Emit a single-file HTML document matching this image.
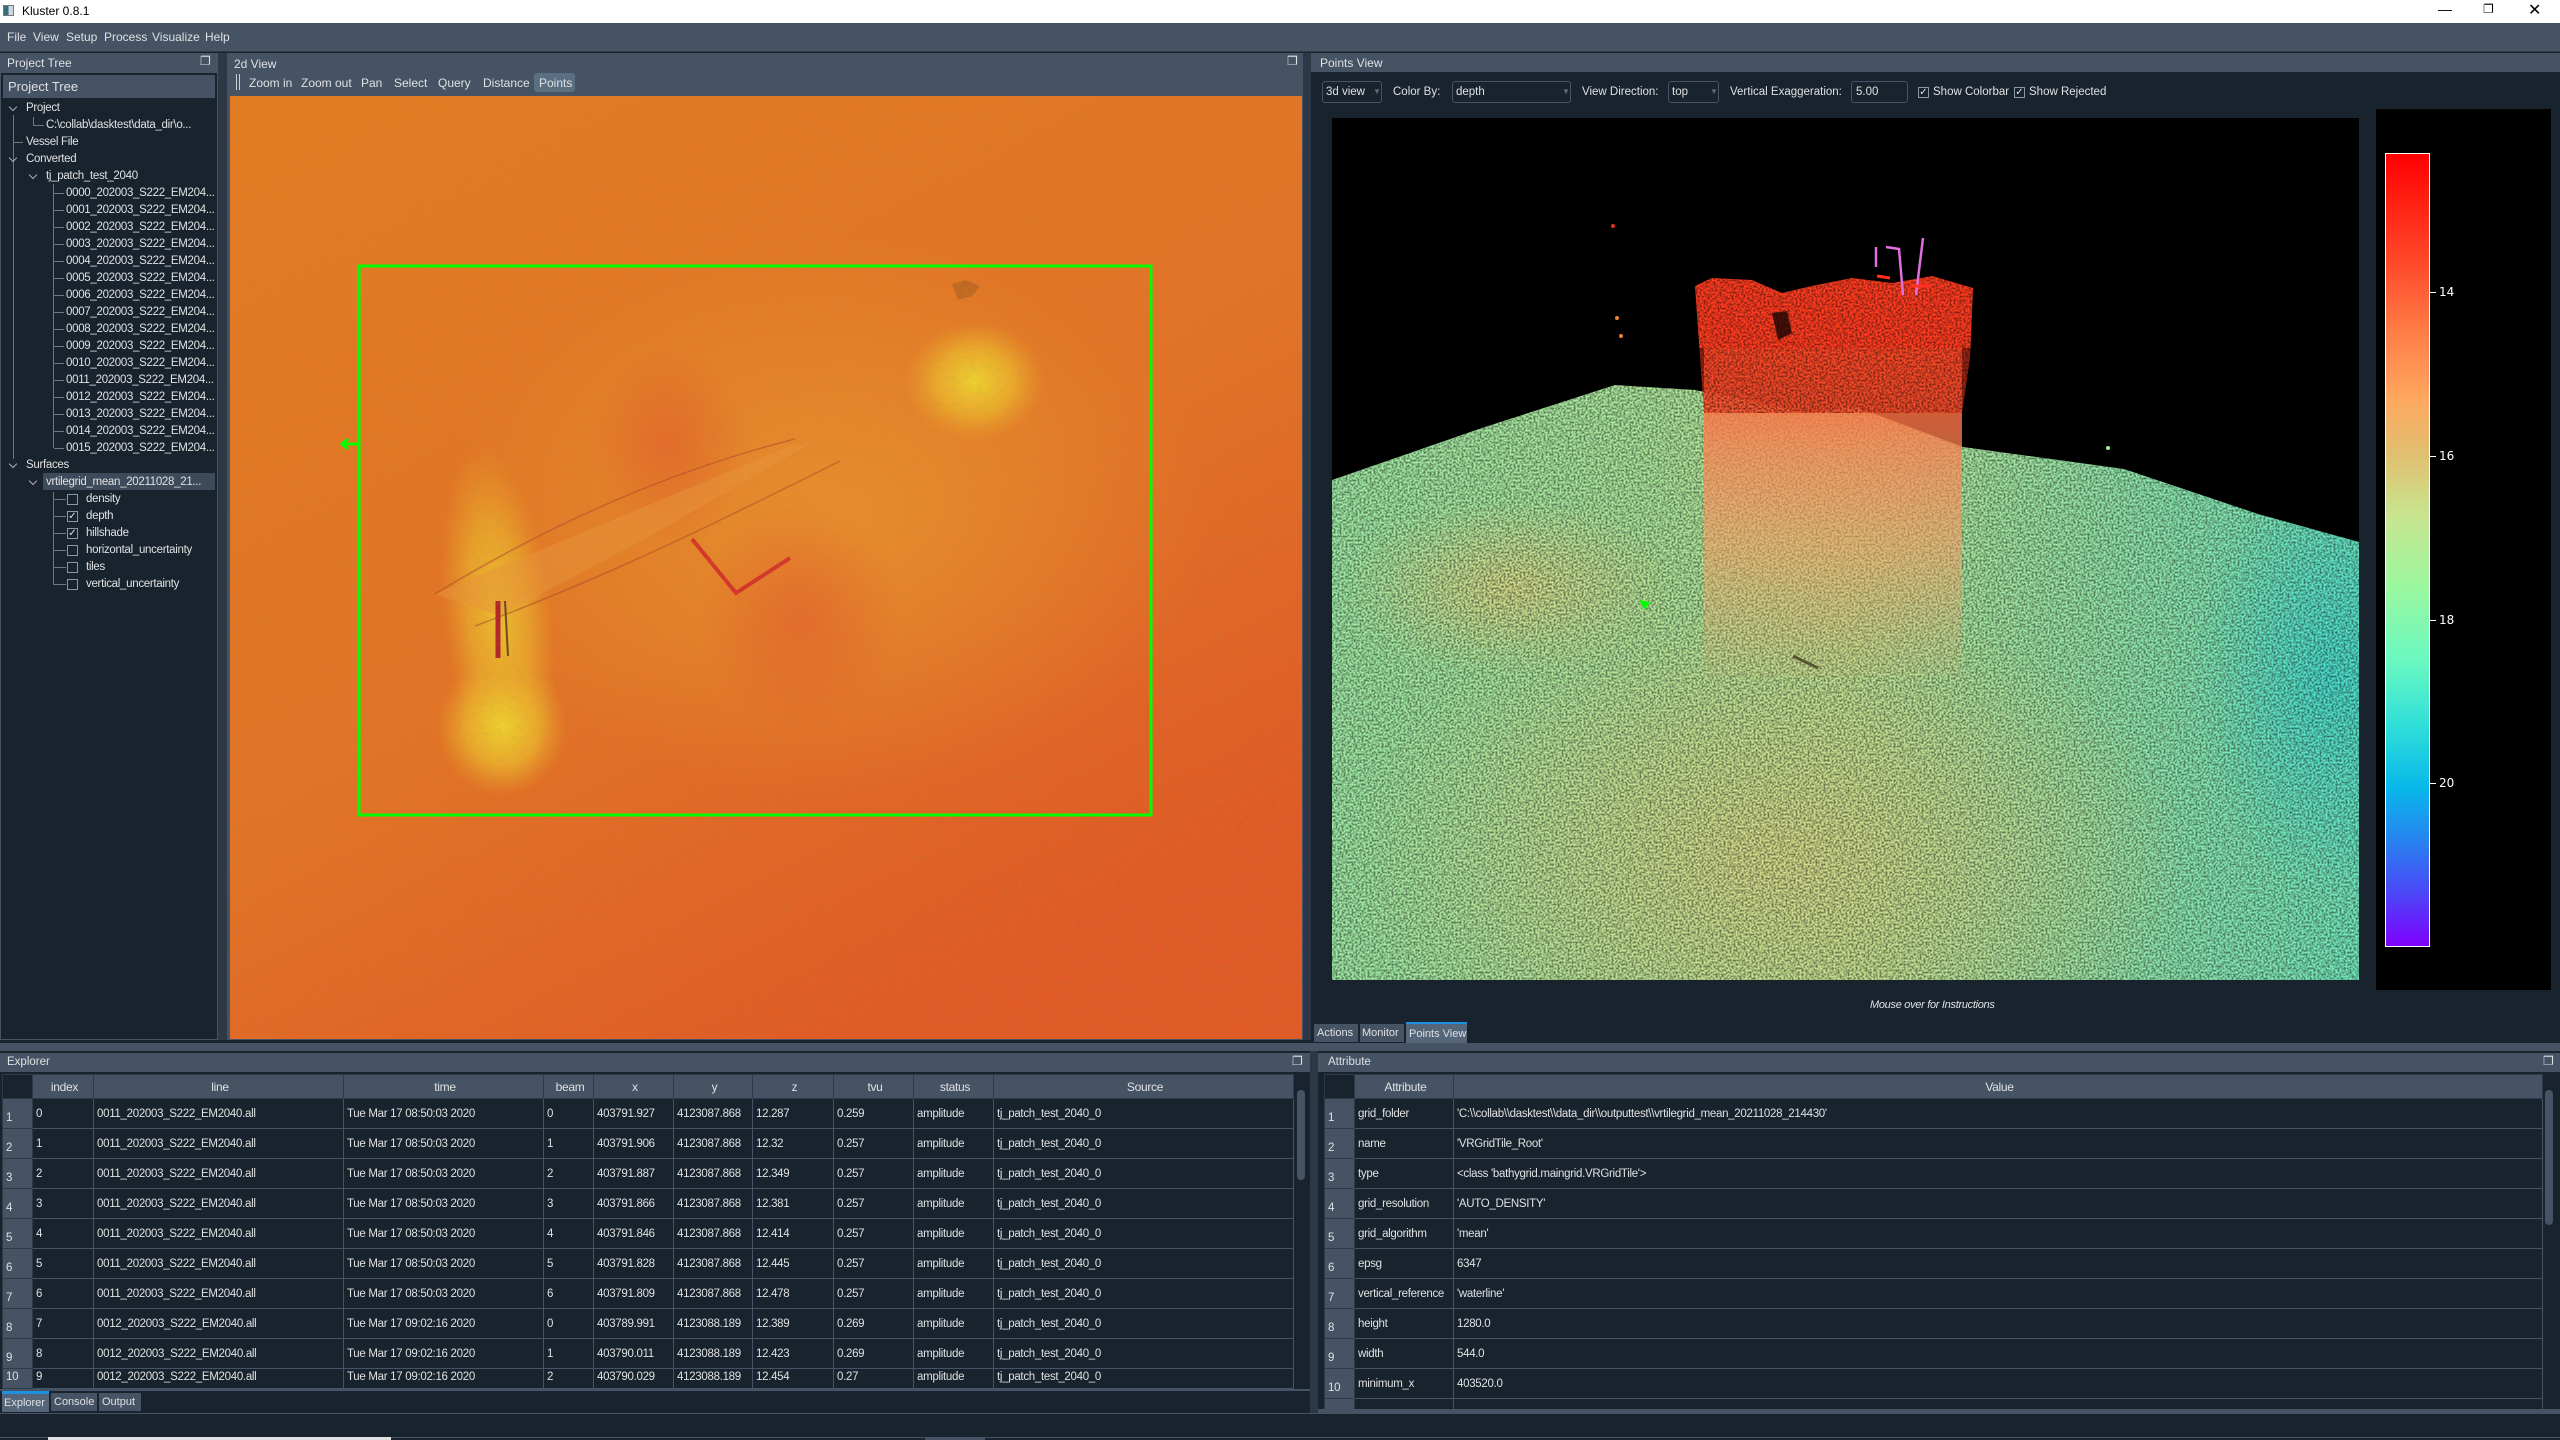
<!DOCTYPE html>
<html><head><meta charset="utf-8">
<style>
*{margin:0;padding:0;box-sizing:border-box}
body{width:2560px;height:1440px;background:#19232D;position:relative;overflow:hidden;font-family:"Liberation Sans",sans-serif;color:#DFE1E2;font-size:12px}
.a{position:absolute;white-space:nowrap}
.t{position:absolute;white-space:nowrap;line-height:17px;font-size:11.5px;letter-spacing:-0.3px}
.cb{position:absolute;width:11px;height:11px;border:1px solid #8a96a4;background:#19232D;font-size:10px;line-height:9px;text-align:center;color:#DFE1E2}
.ch{position:absolute;width:6px;height:6px;border-right:1px solid #aab;border-bottom:1px solid #aab;transform:rotate(45deg)}
table{border-collapse:collapse;position:absolute;table-layout:fixed}
td,th{border:1px solid #455364;height:30px;font-weight:normal;font-size:11.5px;text-align:left;padding-left:3px;overflow:hidden;white-space:nowrap;letter-spacing:-0.3px}
th{background:#455364;height:24px;text-align:center;border-color:#2d3a48;font-size:12px}
td.v{background:#455364;border-color:#2d3a48;padding-left:3px;padding-top:8px}
</style></head><body>
<div class="a" style="left:0;top:0;width:2560px;height:23px;background:#fff;color:#000"></div>
<div class="a" style="left:3px;top:5px;width:11px;height:11px;background:linear-gradient(90deg,#3a6d7a 50%,#cfd8dc 50%);border:1px solid #777"></div>
<div class="a" style="left:22px;top:4px;color:#000;font-size:12px">Kluster 0.8.1</div>
<div class="a" style="left:2438px;top:1px;color:#000;font-size:14px">—</div>
<div class="a" style="left:2483px;top:2px;color:#000;font-size:12px">❐</div>
<div class="a" style="left:2528px;top:0px;color:#000;font-size:16px">✕</div>
<div class="a" style="left:0;top:23px;width:2560px;height:29px;background:#455364;border-bottom:1px solid #2d3a48"></div>
<div class="a" style="left:7px;top:30px">File</div>
<div class="a" style="left:33px;top:30px">View</div>
<div class="a" style="left:66px;top:30px">Setup</div>
<div class="a" style="left:104px;top:30px">Process</div>
<div class="a" style="left:152px;top:30px">Visualize</div>
<div class="a" style="left:205px;top:30px">Help</div>

<div class="a" style="left:0;top:53px;width:218px;height:987px;background:#19232D;border:1px solid #455364"></div>
<div class="a" style="left:0;top:53px;width:218px;height:20px;background:#455364"></div>
<div class="a" style="left:7px;top:56px">Project Tree</div>
<div class="a" style="left:200px;top:54px;font-size:12px">❐</div>
<div class="a" style="left:3px;top:75px;width:212px;height:23px;background:#455364"></div>
<div class="a" style="left:8px;top:79px;font-size:13px">Project Tree</div>
<div class="a" style="left:218px;top:53px;width:9px;height:987px;background:#2d3846"></div>
<div class="a" style="left:13px;top:115px;width:1px;height:344px;background:#6b7886"></div>
<div class="a" style="left:33px;top:117px;width:1px;height:9px;background:#6b7886"></div>
<div class="a" style="left:33px;top:125px;width:10px;height:1px;background:#6b7886"></div>
<div class="a" style="left:13px;top:142px;width:10px;height:1px;background:#6b7886"></div>
<div class="a" style="left:53px;top:184px;width:1px;height:264px;background:#6b7886"></div>
<div class="a" style="left:53px;top:492px;width:1px;height:93px;background:#6b7886"></div>
<div class="a" style="left:43px;top:473px;width:172px;height:17px;background:#3d4a5a"></div>
<div id="tree"></div>

<div class="a" style="left:227px;top:53px;width:1076px;height:43px;background:#455364"></div>
<div class="a" style="left:234px;top:57px">2d View</div>
<div class="a" style="left:1287px;top:54px">❐</div>
<div class="a" style="left:236px;top:74px;width:1px;height:16px;background:#ccc"></div>
<div class="a" style="left:239px;top:74px;width:1px;height:16px;background:#ccc"></div>
<div class="a" style="left:534px;top:73px;width:41px;height:19px;background:#5b6f83;border-radius:3px"></div>
<div class="a" style="left:249px;top:76px">Zoom in</div>
<div class="a" style="left:301px;top:76px">Zoom out</div>
<div class="a" style="left:361px;top:76px">Pan</div>
<div class="a" style="left:394px;top:76px">Select</div>
<div class="a" style="left:438px;top:76px">Query</div>
<div class="a" style="left:483px;top:76px">Distance</div>
<div class="a" style="left:539px;top:76px">Points</div>
<div class="a" style="left:227px;top:96px;width:1076px;height:944px;background:#455364"></div>
<svg class="a" style="left:230px;top:96px" width="1072" height="943" viewBox="0 0 1072 943">
<defs>
<linearGradient id="mb" x1="0" y1="0" x2="0.6" y2="1"><stop offset="0" stop-color="#e27c22"/><stop offset="0.6" stop-color="#e17326"/><stop offset="1" stop-color="#df5a26"/></linearGradient>
<radialGradient id="y1"><stop offset="0" stop-color="#ecd030"/><stop offset="0.55" stop-color="#eab02c" stop-opacity="0.85"/><stop offset="1" stop-color="#e8a02a" stop-opacity="0"/></radialGradient>
<radialGradient id="r1"><stop offset="0" stop-color="#e0502a" stop-opacity="0.45"/><stop offset="1" stop-color="#e0502a" stop-opacity="0"/></radialGradient>
<radialGradient id="o1"><stop offset="0" stop-color="#e99a30" stop-opacity="0.7"/><stop offset="1" stop-color="#e99a30" stop-opacity="0"/></radialGradient>
<filter id="nz" x="0" y="0" width="100%" height="100%"><feTurbulence type="fractalNoise" baseFrequency="0.15 0.3" numOctaves="2" seed="3"/><feColorMatrix values="0 0 0 0 0.45  0 0 0 0 0.25  0 0 0 0 0.1  0 0 0 1.5 -0.7"/></filter>
</defs>
<rect width="1072" height="943" fill="url(#mb)"/>
<ellipse cx="600" cy="420" rx="380" ry="280" fill="url(#o1)"/>
<ellipse cx="440" cy="350" rx="80" ry="100" fill="url(#r1)"/>
<ellipse cx="570" cy="520" rx="100" ry="120" fill="url(#r1)"/>
<ellipse cx="745" cy="285" rx="70" ry="60" fill="url(#y1)"/>
<ellipse cx="268" cy="520" rx="55" ry="170" fill="url(#y1)" transform="rotate(-6 268 520)" opacity="0.8"/>
<ellipse cx="272" cy="630" rx="65" ry="70" fill="url(#y1)"/>
<path d="M205 498 L560 350 L585 345 L420 440 L270 520 Z" fill="#e8943a" opacity="0.5"/>
<path d="M205 498 C300 440 420 380 565 343 M245 530 C380 480 500 420 610 365" stroke="#b0502a" stroke-width="1.5" fill="none" opacity="0.6"/>
<path d="M462 443 L506 497 L560 462" stroke="#d02a2a" stroke-width="4" fill="none" opacity="0.85"/>
<path d="M268 505 L268 562" stroke="#b02828" stroke-width="5"/>
<path d="M275 505 L278 560" stroke="#6d4a20" stroke-width="2"/>
<path d="M722 188 L736 184 L750 190 L742 200 L728 204 Z" fill="#a05a20" opacity="0.5"/>
<rect width="1072" height="943" filter="url(#nz)" opacity="0.25"/>
<rect x="129" y="170" width="792" height="549" fill="none" stroke="#00ff00" stroke-width="3"/>
<path d="M112 348 L128 348 M118 343 L112 348 L118 353" stroke="#00ff00" stroke-width="3" fill="none"/>
</svg>
<div class="a" style="left:1303px;top:53px;width:8px;height:987px;background:#2d3846"></div>

<div class="a" style="left:1311px;top:53px;width:1249px;height:19px;background:#455364"></div>
<div class="a" style="left:1320px;top:56px">Points View</div>
<div class="a" style="left:1322px;top:81px;width:60px;height:22px;border:1px solid #455364;border-radius:3px"></div>
<div class="a" style="left:1326px;top:86px;font-size:11.5px">3d view</div><div class="a" style="left:1373px;top:87px;font-size:8px;color:#667">▼</div>
<div class="a" style="left:1393px;top:86px;font-size:11.5px">Color By:</div>
<div class="a" style="left:1452px;top:81px;width:119px;height:22px;border:1px solid #455364;border-radius:3px"></div>
<div class="a" style="left:1456px;top:86px;font-size:11.5px">depth</div><div class="a" style="left:1562px;top:87px;font-size:8px;color:#667">▼</div>
<div class="a" style="left:1582px;top:86px;font-size:11.5px">View Direction:</div>
<div class="a" style="left:1668px;top:81px;width:51px;height:22px;border:1px solid #455364;border-radius:3px"></div>
<div class="a" style="left:1672px;top:86px;font-size:11.5px">top</div><div class="a" style="left:1710px;top:87px;font-size:8px;color:#667">▼</div>
<div class="a" style="left:1730px;top:86px;font-size:11.5px">Vertical Exaggeration:</div>
<div class="a" style="left:1851px;top:81px;width:57px;height:22px;border:1px solid #455364;border-radius:3px"></div>
<div class="a" style="left:1856px;top:86px;font-size:11.5px">5.00</div>
<div class="cb" style="left:1918px;top:87px">✓</div><div class="a" style="left:1933px;top:86px;font-size:11.5px">Show Colorbar</div>
<div class="cb" style="left:2014px;top:87px">✓</div><div class="a" style="left:2029px;top:86px;font-size:11.5px">Show Rejected</div>
<svg class="a" style="left:1332px;top:118px" width="1027" height="862" viewBox="0 0 1027 862">
<defs>
<linearGradient id="tg" x1="0" y1="0" x2="1" y2="0"><stop offset="0" stop-color="#9ee8a4"/><stop offset="0.5" stop-color="#b6e496"/><stop offset="1" stop-color="#74e6bc"/></linearGradient>
<radialGradient id="ty" cx="0.5" cy="0.5" r="0.5"><stop offset="0" stop-color="#d8d888" stop-opacity="0.9"/><stop offset="1" stop-color="#d8d888" stop-opacity="0"/></radialGradient>
<radialGradient id="tc"><stop offset="0" stop-color="#40d8d0" stop-opacity="0.8"/><stop offset="1" stop-color="#40d8d0" stop-opacity="0"/></radialGradient>
<linearGradient id="st" x1="0" y1="0" x2="0" y2="1"><stop offset="0" stop-color="#ff5a30" stop-opacity="0.95"/><stop offset="0.3" stop-color="#ff8050" stop-opacity="0.75"/><stop offset="0.6" stop-color="#ff9a60" stop-opacity="0.55"/><stop offset="1" stop-color="#ffa060" stop-opacity="0.05"/></linearGradient>
<filter id="sp" x="0" y="0" width="100%" height="100%"><feTurbulence type="fractalNoise" baseFrequency="0.5" numOctaves="1" seed="7"/><feColorMatrix values="0 0 0 0 0  0 0 0 0 0  0 0 0 0 0  0 0 0 -3 1.9"/></filter>
<clipPath id="cl"><path d="M0 362 L150 310 L283 267 L363 272 L477 295 L524 289 L631 329 L792 351 L926 396 L1027 424 L1027 862 L0 862 Z"/></clipPath>
<clipPath id="tw"><path d="M363 168 L380 160 L420 162 L450 175 L480 168 L520 160 L560 165 L600 158 L641 170 L638 240 L630 295 L372 295 Z"/></clipPath>
</defs>
<rect width="1027" height="862" fill="#000"/>
<path d="M0 362 L150 310 L283 267 L363 272 L477 295 L524 289 L631 329 L792 351 L926 396 L1027 424 L1027 862 L0 862 Z" fill="url(#tg)"/>
<g clip-path="url(#cl)">
<ellipse cx="440" cy="740" rx="420" ry="260" fill="url(#ty)"/>
<ellipse cx="180" cy="470" rx="170" ry="90" fill="url(#ty)"/>
<ellipse cx="1000" cy="560" rx="140" ry="220" fill="url(#tc)"/>
<rect width="1027" height="862" filter="url(#sp)" opacity="0.45"/>
</g>
<rect x="372" y="230" width="258" height="330" fill="url(#st)"/>
<g clip-path="url(#tw)">
<rect x="360" y="150" width="290" height="80" fill="#ff3c20"/>
<rect x="360" y="228" width="290" height="70" fill="#ff3c20" opacity="0.6"/>
<rect x="360" y="150" width="290" height="160" filter="url(#sp)" opacity="0.45"/>
</g>
<path d="M440 195 L455 193 L460 215 L446 222 Z" fill="#000" opacity="0.7"/>
<circle cx="281" cy="108" r="2" fill="#e03020"/>
<circle cx="285" cy="200" r="2" fill="#f08040"/>
<circle cx="289" cy="218" r="2" fill="#f08040"/>
<path d="M544 129 L544 149 M554 129 L567 131 L571 177 M591 120 L584 177" stroke="#e070e0" stroke-width="2.5" fill="none"/>
<path d="M545 158 L558 160 M580 168 L600 168" stroke="#ff3020" stroke-width="3"/>
<path d="M461 538 L486 550" stroke="#553" stroke-width="3"/>
<path d="M307 482 L318 484 L313 492 Z" fill="#00ff00"/>
<circle cx="776" cy="330" r="2" fill="#9e9"/>
</svg>
<div class="a" style="left:2376px;top:109px;width:175px;height:881px;background:#000"></div>
<div class="a" style="left:2385px;top:153px;width:45px;height:794px;border:1px solid #fff;background:linear-gradient(#ff0000,#ff4a2a 14%,#ff7a45 22%,#ffa860 31%,#e0c070 38%,#c8e690 46%,#98f8a0 55%,#6af8c0 64%,#30e0d8 72%,#08b8ea 80%,#2880f0 87%,#5040f8 94%,#8000ff)"></div>
<div class="a" style="left:2430px;top:292px;width:6px;height:1px;background:#fff"></div><div class="a" style="left:2439px;top:285px;font-family:'DejaVu Sans';font-size:12px;color:#fff">14</div>
<div class="a" style="left:2430px;top:456px;width:6px;height:1px;background:#fff"></div><div class="a" style="left:2439px;top:449px;font-family:'DejaVu Sans';font-size:12px;color:#fff">16</div>
<div class="a" style="left:2430px;top:620px;width:6px;height:1px;background:#fff"></div><div class="a" style="left:2439px;top:613px;font-family:'DejaVu Sans';font-size:12px;color:#fff">18</div>
<div class="a" style="left:2430px;top:783px;width:6px;height:1px;background:#fff"></div><div class="a" style="left:2439px;top:776px;font-family:'DejaVu Sans';font-size:12px;color:#fff">20</div>
<div class="a" style="left:1870px;top:999px;font-style:italic;font-size:11px;letter-spacing:-0.3px">Mouse over for Instructions</div>
<div class="a" style="left:1314px;top:1024px;width:44px;height:18px;background:#455364"></div><div class="a" style="left:1317px;top:1027px;font-size:11px">Actions</div>
<div class="a" style="left:1360px;top:1024px;width:44px;height:18px;background:#455364"></div><div class="a" style="left:1362px;top:1027px;font-size:11px">Monitor</div>
<div class="a" style="left:1406px;top:1022px;width:61px;height:21px;background:#55667a;border-top:2px solid #1e90e0"></div><div class="a" style="left:1409px;top:1028px;font-size:11px">Points View</div>

<div class="a" style="left:0;top:1043px;width:2560px;height:8px;background:#455364"></div>

<div class="a" style="left:0;top:1053px;width:1310px;height:19px;background:#455364"></div>
<div class="a" style="left:7px;top:1056px;font-size:11.5px">Explorer</div>
<div class="a" style="left:1292px;top:1054px">❐</div>
<table style="left:2px;top:1074px;width:1291px" id="ex">
<colgroup><col style="width:30px"><col style="width:61px"><col style="width:250px"><col style="width:200px"><col style="width:50px"><col style="width:80px"><col style="width:79px"><col style="width:81px"><col style="width:80px"><col style="width:80px"><col style="width:300px"></colgroup>
<tr><th style="background:#19232D"></th><th>index</th><th>line</th><th>time</th><th>beam</th><th>x</th><th>y</th><th>z</th><th>tvu</th><th>status</th><th>Source</th></tr>
</table>
<div class="a" style="left:1295px;top:1076px;width:14px;height:312px;background:#19232D"></div>
<div class="a" style="left:1297px;top:1090px;width:8px;height:90px;background:#455364;border-radius:4px"></div>
<div class="a" style="left:0;top:1389px;width:1310px;height:2px;background:#455364"></div>
<div class="a" style="left:2px;top:1391px;width:47px;height:21px;background:#55667a;border-top:3px solid #1e90e0"></div><div class="a" style="left:4px;top:1397px;font-size:11px">Explorer</div>
<div class="a" style="left:51px;top:1393px;width:46px;height:18px;background:#455364"></div><div class="a" style="left:54px;top:1396px;font-size:11px">Console</div>
<div class="a" style="left:99px;top:1393px;width:42px;height:18px;background:#455364"></div><div class="a" style="left:102px;top:1396px;font-size:11px">Output</div>
<div class="a" style="left:1310px;top:1051px;width:8px;height:362px;background:#2d3846"></div>

<div class="a" style="left:1318px;top:1053px;width:1242px;height:19px;background:#455364"></div>
<div class="a" style="left:1328px;top:1056px;font-size:11.5px">Attribute</div>
<div class="a" style="left:2543px;top:1054px">❐</div>
<table style="left:1324px;top:1074px;width:1218px" id="at">
<colgroup><col style="width:30px"><col style="width:99px"><col style="width:1089px"></colgroup>
<tr><th style="background:#19232D"></th><th>Attribute</th><th>Value</th></tr>
</table>
<div class="a" style="left:2543px;top:1076px;width:13px;height:333px;background:#19232D"></div>
<div class="a" style="left:2545px;top:1090px;width:8px;height:135px;background:#455364;border-radius:4px"></div>
<div class="a" style="left:1318px;top:1409px;width:1242px;height:4px;background:#455364"></div>

<div class="a" style="left:0;top:1413px;width:2560px;height:25px;background:#19232D;border-top:1px solid #455364;border-bottom:1px solid #455364"></div>
<div class="a" style="left:48px;top:1437px;width:343px;height:3px;background:#dfe1e2"></div>
<div class="a" style="left:925px;top:1437px;width:60px;height:3px;background:#455364"></div>

<script>
var tr=[[0,'Project',1],[1,'C:\\collab\\dasktest\\data_dir\\o...',0],[0,'Vessel File',0],[0,'Converted',1],[1,'tj_patch_test_2040',1]];
for(var i=0;i<16;i++)tr.push([2,('000'+i).slice(-4)+'_202003_S222_EM204...',0]);
tr.push([0,'Surfaces',1]);tr.push([1,'vrtilegrid_mean_20211028_21...',1]);
var cbs=[['density',0],['depth',1],['hillshade',1],['horizontal_uncertainty',0],['tiles',0],['vertical_uncertainty',0]];
var h='';
tr.forEach(function(r,i){var y=100+17*i;var x=[26,46,66][r[0]];
 if(r[2])h+='<div class="ch" style="left:'+(x-16)+'px;top:'+(y+4)+'px"></div>';
 else if(r[0]>0)h+='<div class="a" style="left:'+(x-12)+'px;top:'+(y+8)+'px;width:10px;height:1px;background:#6b7886"></div>';
 h+='<div class="t" style="left:'+x+'px;top:'+y+'px">'+r[1]+'</div>';});
cbs.forEach(function(c,j){var y=100+17*(23+j);
 h+='<div class="a" style="left:54px;top:'+(y+8)+'px;width:12px;height:1px;background:#6b7886"></div>';
 h+='<div class="cb" style="left:67px;top:'+(y+3)+'px">'+(c[1]?'✓':'')+'</div><div class="t" style="left:86px;top:'+y+'px">'+c[0]+'</div>';});
document.getElementById('tree').innerHTML=h;
var ex=[['0011',0,'08:50:03',0,'403791.927','4123087.868','12.287','0.259'],['0011',1,'08:50:03',1,'403791.906','4123087.868','12.32','0.257'],['0011',2,'08:50:03',2,'403791.887','4123087.868','12.349','0.257'],['0011',3,'08:50:03',3,'403791.866','4123087.868','12.381','0.257'],['0011',4,'08:50:03',4,'403791.846','4123087.868','12.414','0.257'],['0011',5,'08:50:03',5,'403791.828','4123087.868','12.445','0.257'],['0011',6,'08:50:03',6,'403791.809','4123087.868','12.478','0.257'],['0012',7,'09:02:16',0,'403789.991','4123088.189','12.389','0.269'],['0012',8,'09:02:16',1,'403790.011','4123088.189','12.423','0.269'],['0012',9,'09:02:16',2,'403790.029','4123088.189','12.454','0.27']];
var s='';ex.forEach(function(r,i){var ht=i==9?'height:20px;vertical-align:top;padding-top:2px':'';s+='<tr><td class="v" style="'+ht+'">'+(i+1)+'</td><td style="'+ht+'">'+r[1]+'</td><td style="'+ht+'">'+r[0]+'_202003_S222_EM2040.all</td><td style="'+ht+'">Tue Mar 17 '+r[2]+' 2020</td><td style="'+ht+'">'+r[3]+'</td><td style="'+ht+'">'+r[4]+'</td><td style="'+ht+'">'+r[5]+'</td><td style="'+ht+'">'+r[6]+'</td><td style="'+ht+'">'+r[7]+'</td><td style="'+ht+'">amplitude</td><td style="'+ht+'">tj_patch_test_2040_0</td></tr>';});
document.getElementById('ex').insertAdjacentHTML('beforeend',s);
var at=[['grid_folder',"'C:\\\\collab\\\\dasktest\\\\data_dir\\\\outputtest\\\\vrtilegrid_mean_20211028_214430'"],['name',"'VRGridTile_Root'"],['type',"&lt;class 'bathygrid.maingrid.VRGridTile'&gt;"],['grid_resolution',"'AUTO_DENSITY'"],['grid_algorithm',"'mean'"],['epsg','6347'],['vertical_reference',"'waterline'"],['height','1280.0'],['width','544.0'],['minimum_x','403520.0']];
s='';at.forEach(function(r,i){s+='<tr><td class="v">'+(i+1)+'</td><td>'+r[0]+'</td><td>'+r[1]+'</td></tr>';});
s+='<tr><td class="v" style="height:11px"></td><td style="height:11px"></td><td style="height:11px"></td></tr>';
document.getElementById('at').insertAdjacentHTML('beforeend',s);
</script>
</body></html>
